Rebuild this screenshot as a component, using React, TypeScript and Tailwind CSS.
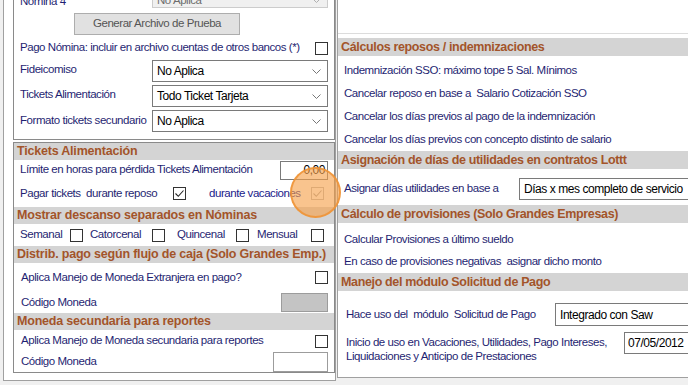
import React from "react";

const Check = ({ checked = false, disabled = false }: { checked?: boolean; disabled?: boolean }) => (
  <span
    className={
      "w-[13px] h-[13px] shrink-0 bg-white flex items-center justify-center border " +
      (disabled ? "border-[#bcbcbc]" : "border-[#333333]")
    }
  >
    {checked && (
      <svg width="11" height="11" viewBox="0 0 11 11">
        <path d="M1.5 5.5 L4.3 8.3 L9.5 2.5" fill="none" stroke={disabled ? "#a8a8a8" : "#222"} strokeWidth="1.1" />
      </svg>
    )}
  </span>
);

const Chevron = ({ color = "#888" }: { color?: string }) => (
  <svg width="9" height="5" viewBox="0 0 9 5" className="shrink-0">
    <path d="M0.5 0.5 L4.5 4.5 L8.5 0.5" fill="none" stroke={color} strokeWidth="1" />
  </svg>
);

const Select = ({ value, className = "", disabled = false, chevron = true }: { value: string; className?: string; disabled?: boolean; chevron?: boolean }) => (
  <div
    className={
      "h-full flex justify-between pl-[4px] pr-[6px] border " +
      (disabled ? "bg-[#f0f0f0] border-[#cccccc] text-[#6d6d6d] items-end pb-[1px] leading-[12px]" : "bg-white border-[#7a7a7a] text-black items-center") +
      " " +
      className
    }
  >
    <span className="whitespace-nowrap">{value}</span>
    {chevron && <span className={disabled ? "mb-[3px]" : ""}><Chevron color={disabled ? "#b0b0b0" : "#777"} /></span>}
  </div>
);

const Header = ({ children, className = "" }: { children: React.ReactNode; className?: string }) => (
  <div
    className={
      "shrink-0 bg-[#d4d4d4] text-[#a3542a] font-bold text-[12.5px] pl-[3px] flex items-center whitespace-nowrap " +
      className
    }
  >
    {children}
  </div>
);

export default function App() {
  return (
    <div className="relative w-[688px] h-[385px] overflow-hidden bg-[#f0f0f0] flex font-['Liberation_Sans',Arial,sans-serif] text-[11.5px] text-[#1f1f72] tracking-[-0.45px]">
      {/* LEFT PANEL */}
      <div className="ml-[3px] w-[333px] h-[381px] border-l border-r border-b border-[#a0a0a0] bg-white flex flex-col pl-[9px]">
        {/* upper group box */}
        <div className="w-[322px] border-l border-r border-b border-[#8a8a8a] flex flex-col pl-[6px] pb-[7px]">
          <div className="-mt-[14px] h-[22px] flex items-end">
            <span className="w-[132px] leading-[12px] mb-[1px]">Nómina 4</span>
            <Select value="No Aplica" className="w-[176px]" disabled />
          </div>
          <div className="mt-[5px] ml-[54px] w-[166px] h-[22px] bg-[#e1e1e1] border border-[#adadad] flex items-center justify-center text-[#555]">
            Generar Archivo de Prueba
          </div>
          <div className="mt-[6px] h-[14px] flex items-center justify-between pr-[6px]">
            <span className="whitespace-nowrap">Pago Nómina: incluir en archivo cuentas de otros bancos (*)</span>
            <Check />
          </div>
          <div className="mt-[5px] h-[22px] flex items-center">
            <span className="w-[132px] -mt-[3px]">Fideicomiso</span>
            <Select value="No Aplica" className="w-[176px] text-[12px]" />
          </div>
          <div className="mt-[3px] h-[22px] flex items-center">
            <span className="w-[132px] -mt-[3px]">Tickets Alimentación</span>
            <Select value="Todo Ticket Tarjeta" className="w-[176px] text-[12px]" />
          </div>
          <div className="mt-[3px] h-[22px] flex items-center">
            <span className="w-[132px] -mt-[1px] whitespace-nowrap">Formato tickets secundario</span>
            <Select value="No Aplica" className="w-[176px] text-[12px]" />
          </div>
        </div>

        {/* lower group box */}
        <div className="mt-[2px] w-[322px] h-[231px] border border-[#8a8a8a] flex flex-col">
          <Header className="h-[17px] tracking-[-0.2px]">Tickets Alimentación</Header>
          <div className="h-[20px] flex items-center justify-between pl-[6px] pr-[6px]">
            <span>Límite en horas para pérdida Tickets Alimentación</span>
            <div className="w-[48px] h-[19px] border border-[#7a7a7a] flex items-center justify-end pr-[2px] text-black text-[12px]">0,00</div>
          </div>
          <div className="h-[27px] flex items-center pl-[6px]">
            <span className="w-[153px] whitespace-nowrap">Pagar tickets&nbsp; durante reposo</span>
            <Check checked />
            <span className="ml-[23px] w-[102px] whitespace-nowrap text-[#20208a]">durante vacaciones</span>
            <Check checked disabled />
          </div>
          <Header className="h-[17px] tracking-[-0.2px]">Mostrar descanso separados en Nóminas</Header>
          <div className="h-[22px] flex items-center pl-[6px]">
            <span className="w-[50px]">Semanal</span>
            <Check />
            <span className="ml-[7px] w-[62px]">Catorcenal</span>
            <Check />
            <span className="ml-[12px] w-[59px]">Quincenal</span>
            <Check />
            <span className="ml-[8px] w-[54px]">Mensual</span>
            <Check />
          </div>
          <Header className="h-[17px] tracking-[-0.2px]">Distrib. pago según flujo de caja (Solo Grandes Emp.)</Header>
          <div className="h-[29px] flex items-center justify-between pl-[7px] pr-[6px]">
            <span>Aplica Manejo de Moneda Extranjera en pago?</span>
            <Check />
          </div>
          <div className="h-[21px] flex items-center justify-between pl-[7px] pr-[6px]">
            <span>Código Moneda</span>
            <div className="w-[47px] h-[19px] bg-[#c4c4c4] border border-[#9c9c9c]" />
          </div>
          <Header className="h-[17px] tracking-[-0.2px]">Moneda secundaria para reportes</Header>
          <div className="h-[22px] flex items-center justify-between pl-[7px] pr-[6px]">
            <span>Aplica Manejo de Moneda secundaria para reportes</span>
            <Check />
          </div>
          <div className="h-[20px] flex items-center justify-between pl-[7px] pr-[6px]">
            <span>Código Moneda</span>
            <div className="w-[55px] h-[20px] bg-white border border-[#9c9c9c]" />
          </div>
        </div>
      </div>

      {/* RIGHT PANEL */}
      <div className="ml-[1px] flex-1 h-[378px] border-l border-b border-[#a0a0a0] bg-white flex flex-col">
        <div className="h-[34px] shrink-0 border-b border-[#dcdcdc]" />
        <Header className="mt-[4px] h-[18px] tracking-[-0.35px]">Cálculos reposos / indemnizaciones</Header>
        <div className="mt-[3px] pl-[6px] flex flex-col">
          <div className="h-[23px] flex items-center">Indemnización SSO: máximo tope 5 Sal. Mínimos</div>
          <div className="h-[23px] flex items-center">Cancelar reposo en base a&nbsp; Salario Cotización SSO</div>
          <div className="h-[23px] flex items-center">Cancelar los días previos al pago de la indemnización</div>
          <div className="h-[23px] flex items-center">Cancelar los días previos con concepto distinto de salario</div>
        </div>
        <Header className="h-[18px] tracking-[-0.35px]">Asignación de días de utilidades en contratos Lottt</Header>
        <div className="mt-[9px] h-[22px] shrink-0 flex items-center pl-[6px]">
          <span className="w-[175px]">Asignar días utilidades en base a</span>
          <Select value="Días x mes completo de servicio" className="w-[200px] text-[12px]" chevron={false} />
        </div>
        <Header className="mt-[5px] h-[18px] tracking-[-0.35px]">Cálculo de provisiones (Solo Grandes Empresas)</Header>
        <div className="mt-[6px] pl-[6px] flex flex-col">
          <div className="h-[22px] flex items-center">Calcular Provisiones a último sueldo</div>
          <div className="h-[22px] flex items-center">En caso de provisiones negativas&nbsp; asignar dicho monto</div>
        </div>
        <Header className="h-[18px] tracking-[-0.35px] bg-[#cacaca]">Manejo del módulo Solicitud de Pago</Header>
        <div className="mt-[12px] h-[23px] shrink-0 flex items-center pl-[8px]">
          <span className="w-[209px]">Hace uso del&nbsp; módulo&nbsp; Solicitud de Pago</span>
          <Select value="Integrado con Saw" className="w-[160px] text-[12px]" chevron={false} />
        </div>
        <div className="mt-[6px] flex pl-[8px]">
          <div className="w-[278px] pt-[3px] leading-[14px]">
            Inicio de uso en Vacaciones, Utilidades, Pago Intereses,
            <br />
            Liquidaciones y Anticipo de Prestaciones
          </div>
          <div className="w-[80px] h-[22px] shrink-0 border border-[#7a7a7a] flex items-center pl-[3px] text-black text-[12px]">07/05/2012</div>
        </div>
      </div>

      {/* highlight circle overlay */}
      <div className="absolute left-[290px] top-[167px] w-[51px] h-[51px] rounded-full bg-[rgba(246,160,72,0.62)] border-2 border-[rgba(238,146,52,0.85)]" />
    </div>
  );
}
